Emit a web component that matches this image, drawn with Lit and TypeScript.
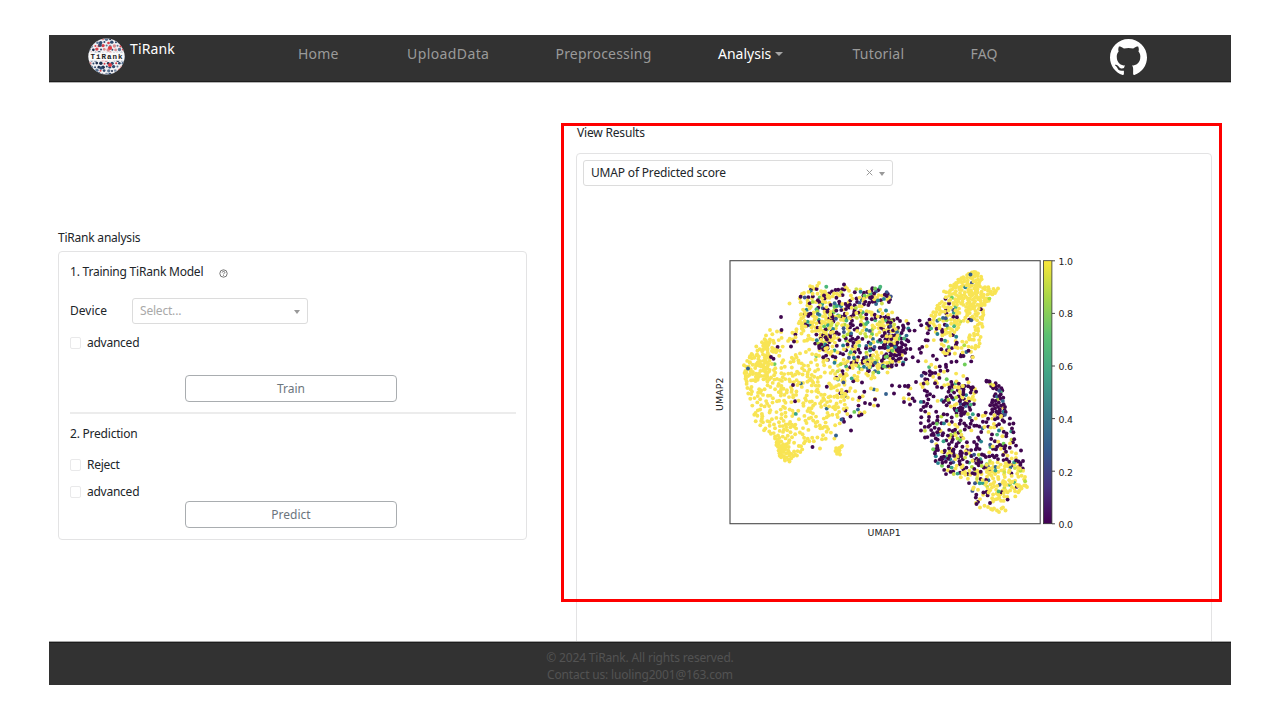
import { LitElement, html, svg, css } from "lit";
import { customElement } from "lit/decorators.js";

type Pt = [number, number];

const VIRIDIS = ["#440154", "#46327e", "#365c8d", "#3b7f8a", "#42a486", "#5cc072", "#a5d648", "#fbe63a"];
const YELLOW = "#f8e454";
const PURPLE = "#40074f";
const MID = ["#3b528b", "#31688e", "#26828e", "#35a386", "#4bb779", "#6ece58", "#b5de3b", "#cfe04a"];

function makeRandom(seed: number) {
  let s = seed;
  return () => {
    s = (s + 0x6d2b79f5) | 0;
    let t = Math.imul(s ^ (s >>> 15), 1 | s);
    t = (t + Math.imul(t ^ (t >>> 7), 61 | t)) ^ t;
    return ((t ^ (t >>> 14)) >>> 0) / 4294967296;
  };
}

function inside(x: number, y: number, poly: Pt[]) {
  let hit = false;
  for (let i = 0, j = poly.length - 1; i < poly.length; j = i++) {
    const [xi, yi] = poly[i];
    const [xj, yj] = poly[j];
    if (yi > y !== yj > y && x < ((xj - xi) * (y - yi)) / (yj - yi) + xi) hit = !hit;
  }
  return hit;
}

// Outline, number of cells, share of high scores, share of low scores.
// Outlines are in thirds of a plot unit, from the corner (725, 255).
type Cluster = [Pt[], number, number, number];

const CLUSTERS: Cluster[] = [
  [[[60, 320], [120, 262], [190, 300], [250, 280], [330, 330], [372, 365], [370, 430], [340, 520], [330, 555], [250, 562], [180, 600], [150, 560], [90, 500], [75, 440], [56, 390]], 375, 0.98, 0.008],
  [[[56, 330], [110, 250], [150, 255], [140, 350], [130, 380], [56, 380]], 66, 1, 0],
  [[[105, 265], [130, 225], [210, 225], [250, 260], [150, 290]], 16, 0.9, 0.05],
  [[[145, 530], [165, 550], [195, 592], [240, 580], [210, 608], [180, 618], [160, 600]], 42, 1, 0],
  [[[330, 572], [352, 575], [345, 600], [332, 598]], 7, 1, 0],
  [[[225, 100], [280, 88], [310, 95], [320, 180], [222, 180]], 62, 0.58, 0.2],
  [[[220, 170], [320, 170], [340, 240], [300, 290], [260, 260], [220, 210]], 92, 0.68, 0.17],
  [[[195, 195], [240, 200], [250, 260], [205, 265]], 12, 0.85, 0.1],
  [[[300, 110], [360, 90], [415, 105], [420, 190], [310, 190]], 75, 0.32, 0.43],
  [[[405, 110], [470, 92], [500, 120], [502, 140], [450, 150], [410, 150]], 46, 0.35, 0.33],
  [[[310, 180], [500, 160], [520, 230], [500, 330], [480, 360], [420, 350], [350, 330], [270, 310], [300, 200]], 285, 0.42, 0.37],
  [[[330, 330], [490, 300], [490, 360], [400, 380], [365, 440], [325, 390]], 60, 0.52, 0.2],
  [[[350, 410], [450, 400], [462, 450], [390, 490], [350, 500]], 22, 0.55, 0.35],
  [[[470, 180], [545, 195], [555, 230], [540, 330], [500, 340], [480, 250]], 78, 0.15, 0.7],
  [[[540, 195], [605, 190], [620, 250], [740, 290], [750, 320], [690, 350], [600, 340], [550, 300]], 46, 0.2, 0.68],
  [[[590, 350], [640, 340], [700, 350], [740, 380], [700, 400], [640, 400], [585, 400]], 36, 0.4, 0.38],
  [[[500, 385], [570, 385], [570, 445], [520, 430]], 9, 0.3, 0.65],
  [[[655, 110], [700, 67], [745, 48], [768, 60], [772, 90], [812, 102], [805, 122], [780, 150], [740, 165], [690, 140], [660, 130]], 138, 0.985, 0],
  [[[620, 160], [660, 130], [700, 150], [710, 200], [690, 235], [640, 240], [605, 220]], 85, 0.7, 0.15],
  [[[710, 150], [780, 160], [777, 210], [770, 262], [740, 315], [720, 260], [750, 220], [715, 200]], 56, 0.95, 0.03],
  [[[640, 230], [700, 240], [740, 300], [650, 300]], 22, 0.72, 0.2],
  [[[585, 430], [610, 420], [640, 480], [650, 540], [600, 548], [582, 500]], 32, 0.1, 0.8],
  [[[590, 400], [640, 430], [690, 380], [755, 400], [750, 450], [700, 470], [640, 440]], 72, 0.24, 0.56],
  [[[780, 375], [830, 390], [845, 480], [800, 500], [795, 450], [815, 410]], 54, 0.25, 0.6],
  [[[640, 470], [720, 460], [870, 490], [870, 560], [895, 625], [780, 620], [640, 610], [612, 570]], 185, 0.24, 0.62],
  [[[620, 580], [740, 590], [800, 640], [740, 660], [660, 660], [630, 620]], 80, 0.2, 0.52],
  [[[780, 620], [890, 620], [905, 690], [860, 737], [800, 740], [780, 690]], 112, 0.77, 0.12],
  [[[690, 655], [780, 650], [790, 720], [750, 750], [740, 700]], 30, 0.45, 0.38],
];

const YELLOW_DOTS: Pt[] = [
  [789.5, 303.5], [819, 283], [770, 330], [777, 331.5], [980, 507.5], [984.5, 505.8], [988, 507], [991, 509], [994, 508.5],
  [997, 510.5], [999, 512], [1001.5, 508.5], [1003, 507.5], [1005.5, 510.5], [992.5, 509.8], [976, 503], [973, 489], [1025, 477], [1025.5, 485.5],
  [838, 452], [840, 454.5], [835.5, 451], [820, 448.5], [842, 446], [871, 388.5], [877, 390],
  [996, 291], [998, 288.5], [995, 293], [974, 272], [978, 273.5], [789.5, 461.5], [785, 460.5], [1021, 487], [1027, 487], [1018, 486],
];
const PURPLE_DOTS: Pt[] = [
  [781, 317], [781.5, 330], [844, 284.5], [812.5, 447], [793, 385], [851, 430.5], [844, 421.8], [850.5, 416.5], [861.5, 414.5],
  [878, 405.5], [859.5, 397.5], [870, 404], [865, 403], [892, 385.5], [894, 393.5], [908, 386.8], [910, 404.5], [904, 402], [875, 399.5],
  [771, 357], [773.5, 358.8], [791, 346.5], [794, 341.5], [976.5, 504], [990, 503], [986.5, 380.8], [989.5, 381.5], [1023, 461], [1021, 450.5],
  [862, 382.5], [916, 382], [923.5, 407], [921, 430.5], [925, 437.5],
];
const BLUE_DOTS: Pt[] = [[970.5, 274.5], [748, 368.5], [836, 435.5], [841.5, 419.5], [886, 394]];

interface Dot { x: number; y: number; c: string; z: number }

function buildDots(): Dot[] {
  const rnd = makeRandom(77);
  const out: Dot[] = [];
  for (const [outline, count, high, low] of CLUSTERS) {
    const poly = outline.map(([x, y]): Pt => [725 + x / 3, 255 + y / 3]);
    const xs = poly.map((p) => p[0]);
    const ys = poly.map((p) => p[1]);
    const x0 = Math.min(...xs), x1 = Math.max(...xs), y0 = Math.min(...ys), y1 = Math.max(...ys);
    const local: Dot[] = [];
    for (let tries = 0; local.length < count && tries < 20000; tries++) {
      const x = x0 + rnd() * (x1 - x0);
      const y = y0 + rnd() * (y1 - y0);
      if (!inside(x, y, poly)) continue;
      if (local.some((d) => Math.hypot(d.x - x, d.y - y) < 2)) continue;
      const k = rnd();
      const m = MID[Math.floor(rnd() * MID.length)];
      local.push({ x, y, c: k < high ? YELLOW : k < high + low ? PURPLE : m, z: rnd() });
    }
    out.push(...local);
  }
  out.sort((a, b) => a.z - b.z);
  YELLOW_DOTS.forEach(([x, y]) => out.push({ x, y, c: YELLOW, z: 1 }));
  PURPLE_DOTS.forEach(([x, y]) => out.push({ x, y, c: PURPLE, z: 1 }));
  BLUE_DOTS.forEach(([x, y]) => out.push({ x, y, c: "#33608d", z: 1 }));
  return out;
}

@customElement("umap-plot")
export class UmapPlot extends LitElement {
  static styles = css`
    :host { display: block; }
    svg { display: block; }
    text { font-family: "DejaVu Sans", sans-serif; font-size: 9.4px; fill: #222; }
  `;
  private dots = buildDots();
  render() {
    const ticks = ["1.0", "0.8", "0.6", "0.4", "0.2", "0.0"];
    return html`<svg width="400" height="310" viewBox="700 240 400 310">
      <defs>
        <linearGradient id="bar" x1="0" y1="1" x2="0" y2="0">
          ${VIRIDIS.map((c, i) => svg`<stop offset=${i / 7} stop-color=${c}></stop>`)}
        </linearGradient>
      </defs>
      ${this.dots.map((d) => svg`<circle cx=${d.x.toFixed(1)} cy=${d.y.toFixed(1)} r="1.95" fill=${d.c}></circle>`)}
      <rect x="730" y="260.7" width="310.2" height="263" fill="none" stroke="#4a4a4a" stroke-width="1.1"></rect>
      <rect x="1043.5" y="260.7" width="8.4" height="263" fill="url(#bar)" stroke="#333" stroke-width="0.8"></rect>
      ${ticks.map((t, i) => svg`<line x1="1052" x2="1055" y1=${260.8 + i * 52.6} y2=${260.8 + i * 52.6} stroke="#333" stroke-width="0.9"></line>
        <text x="1058.5" y=${264.5 + i * 52.75} textLength="14.4">${t}</text>`)}
      <text x="867.6" y="536.3" textLength="33">UMAP1</text>
      <text transform="translate(723.4 411) rotate(-90)" textLength="33.5">UMAP2</text>
    </svg>`;
  }
}

@customElement("app-logo")
export class AppLogo extends LitElement {
  static styles = css`
    :host { display: block; }
    svg { display: block; }
    text { font-family: "Liberation Mono", monospace; font-weight: 700; font-size: 7.5px; fill: #222; }
  `;
  render() {
    const rnd = makeRandom(11);
    const colors = ["#2f4a70", "#2f4a70", "#5c7594", "#1f2f4d", "#d9414a", "#7d8fa8", "#d98a8e"];
    const dots: Pt[] = [];
    for (let r = 0; r < 11; r++)
      for (let c = 0; c < 11; c++)
        dots.push([c * 3.7 + (r % 2) * 1.8 + rnd() - 0.5, r * 3.5 + 1 + rnd() - 0.5]);
    return html`<svg width="37" height="37" viewBox="0 0 37 37">
      <defs><clipPath id="disc"><circle cx="18.5" cy="18.5" r="18"></circle></clipPath></defs>
      <g clip-path="url(#disc)">
        <rect width="37" height="37" fill="#f0f0f3"></rect>
        ${dots.map(([x, y], i) => svg`<circle cx=${x} cy=${y} r=${1 + (i % 3) * 0.35} fill=${colors[Math.floor(rnd() * colors.length)]}></circle>`)}
        <circle cx="22" cy="10" r="2.1" fill="#e23b43"></circle>
        <circle cx="22" cy="27" r="2" fill="#e23b43"></circle>
        <circle cx="12" cy="7" r="1.9" fill="#2f4a70"></circle>
        <circle cx="13" cy="30" r="1.8" fill="#2f4a70"></circle>
        <rect y="14.2" width="37" height="8.6" fill="#fafafa"></rect>
      </g>
      <text x="2.5" y="21" textLength="32">TiRank</text>
    </svg>`;
  }
}

@customElement("app-root")
export class AppRoot extends LitElement {
  static styles = css`
    :host {
      display: block;
      position: relative;
      box-sizing: border-box;
      width: 1280px;
      height: 720px;
      padding: 35px 49px;
      overflow: hidden;
      background: #fff;
      color: #212529;
      font-family: "Noto Sans", "Open Sans", sans-serif;
      font-size: 12px;
      line-height: 18px;
    }
    * { box-sizing: border-box; }
    .page { display: flex; flex-direction: column; height: 650px; }
    .nav {
      display: grid;
      grid-template-columns: 210px 109px 148.5px 162.5px 134.5px 118px 139.5px 1fr;
      height: 47px;
      padding-left: 39px;
      background: #323232;
      border-bottom: 1px solid #1d1d1d;
      box-shadow: 0 1px 0 #b5b5b5;
      color: #9a9a9a;
      font-size: 14px;
      line-height: 20px;
      white-space: nowrap;
      flex: none;
    }
    .brand { display: flex; gap: 5px; padding-top: 3px; color: #fff; }
    .brand-name { margin-top: 1px; letter-spacing: 0.12px; }
    .link { padding-top: 9px; letter-spacing: 0.2px; }
    .upload { letter-spacing: 0.4px; }
    .active { color: #fff; letter-spacing: 0; }
    .caret {
      display: inline-block;
      margin-left: 4px;
      vertical-align: 3px;
      border: 4px solid transparent;
      border-top-color: #a5a5a5;
      border-bottom: 0;
    }
    .github { padding-top: 4px; }
    .github svg { display: block; }
    .main { display: flex; height: 559px; padding: 0 19px 0 9px; justify-content: space-between; overflow: hidden; margin-top: 1px; flex: none; }
    .left { width: 469px; padding-top: 146px; }
    .right { width: 636px; padding-top: 41px; }
    .heading { height: 22px; white-space: nowrap; }
    .heading-right { height: 29px; }
    .right .heading { padding-left: 1px; }
    .card { border: 1px solid #e3e3e4; border-radius: 4px; }
    .form { height: 289px; padding: 11px 10px 0 11px; display: flex; flex-direction: column; }
    .title { display: flex; align-items: center; height: 18px; white-space: nowrap; }
    .help { margin: 3px 0 0 16px; }
    .row { display: flex; align-items: center; height: 26px; margin-top: 17px; }
    .row-label { width: 62px; }
    .select {
      display: flex;
      align-items: center;
      height: 26px;
      border: 1px solid #dcdcdc;
      border-radius: 3px;
      padding: 0 7px 1px 7px;
      white-space: nowrap;
    }
    .device { width: 176px; color: #a9a9a9; letter-spacing: -0.2px; }
    .arrow { margin: 2px 0 0 auto; border: 3.5px solid transparent; border-top: 4px solid #999; border-bottom: 0; }
    .clear { margin-left: auto; }
    .clear + .arrow { margin-left: 6px; }
    .check { display: flex; align-items: center; gap: 6px; height: 18px; letter-spacing: -0.25px; }
    .box { width: 11px; height: 12px; border: 1px solid #e9e9ea; border-radius: 2px; }
    .check-train { margin-top: 10px; }
    .check-reject { margin-top: 13px; }
    .check-pred { margin-top: 9px; }
    .btn {
      width: 212px;
      height: 27px;
      margin-left: 115px;
      border: 1px solid #a9adb0;
      border-radius: 4px;
      color: #6c757d;
      text-align: center;
      line-height: 25px;
      flex: none;
    }
    .btn-train { margin-top: 23px; }
    .rule { height: 2px; margin: 10px 0 11px; background: #ececec; flex: none; }
    .results { height: 520px; padding: 6px; }
    .result-select { width: 310px; }
    .plot { margin: 54px 0 0 117px; }
    .footer {
      height: 43px;
      background: #323232;
      border-top: 1px solid #1d1d1d;
      box-shadow: 0 -1px 0 #a5a5a5;
      color: #535353;
      padding-top: 5.5px;
      text-align: center;
      line-height: 17px;
      letter-spacing: -0.17px;
      flex: none;
    }
    .frame {
      position: absolute;
      left: 561px;
      top: 123px;
      width: 661px;
      height: 479px;
      border: 3px solid #fe0000;
    }
    .t-head { letter-spacing: -0.22px; }
    .t-value { letter-spacing: -0.18px; }
  `;
  render() {
    return html`
      <div class="page">
        <nav class="nav">
          <div class="brand"><app-logo></app-logo><span class="brand-name">TiRank</span></div>
          <span class="link">Home</span>
          <span class="link upload">UploadData</span>
          <span class="link">Preprocessing</span>
          <span class="link active">Analysis<i class="caret"></i></span>
          <span class="link">Tutorial</span>
          <span class="link">FAQ</span>
          <span class="github">
            <svg width="37" height="36" viewBox="0 0 16 15.6" preserveAspectRatio="none" fill="#fff"><path d="M8 0C3.58 0 0 3.58 0 8c0 3.54 2.29 6.53 5.47 7.59.4.07.55-.17.55-.38 0-.19-.01-.82-.01-1.49-2.01.37-2.53-.49-2.69-.94-.09-.23-.48-.94-.82-1.13-.28-.15-.68-.52-.01-.53.63-.01 1.08.58 1.23.82.72 1.21 1.87.87 2.33.66.07-.52.28-.87.51-1.07-1.78-.2-3.64-.89-3.64-3.95 0-.87.31-1.59.82-2.15-.08-.2-.36-1.02.08-2.12 0 0 .67-.21 2.2.82.64-.18 1.32-.27 2-.27s1.36.09 2 .27c1.53-1.04 2.2-.82 2.2-.82.44 1.1.16 1.92.08 2.12.51.56.82 1.27.82 2.15 0 3.07-1.87 3.75-3.65 3.95.29.25.54.73.54 1.48 0 1.07-.01 1.93-.01 2.2 0 .21.15.46.55.38A8.01 8.01 0 0 0 16 8c0-4.42-3.58-8-8-8z"></path></svg>
          </span>
        </nav>
        <main class="main">
          <section class="left">
            <div class="heading t-head">TiRank analysis</div>
            <div class="card form">
              <div class="title"><span class="t-head">1. Training TiRank Model</span>
                <svg class="help" width="9" height="9" viewBox="0 0 9 9" fill="none" stroke="#555" stroke-width="0.8">
                  <circle cx="4.5" cy="4.5" r="3.7"></circle>
                  <path d="M3.2 3.6c0-1.7 2.7-1.6 2.6 0-.1.8-1.3.8-1.3 1.8M4.5 6.1v.8"></path>
                </svg>
              </div>
              <div class="row"><span class="row-label">Device</span>
                <div class="select device">Select...<i class="arrow"></i></div>
              </div>
              <div class="check check-train"><i class="box"></i>advanced</div>
              <div class="btn btn-train">Train</div>
              <div class="rule"></div>
              <div class="title t-head">2. Prediction</div>
              <div class="check check-reject"><i class="box"></i>Reject</div>
              <div class="check check-pred"><i class="box"></i>advanced</div>
              <div class="btn">Predict</div>
            </div>
          </section>
          <section class="right">
            <div class="heading heading-right t-value">View Results</div>
            <div class="card results">
              <div class="select result-select"><span class="t-value">UMAP of Predicted score</span>
                <svg class="clear" width="7" height="7" viewBox="0 0 7 7" stroke="#999" stroke-width="1"><path d="M.7 .7 6.3 6.3M6.3 .7 .7 6.3"></path></svg>
                <i class="arrow"></i>
              </div>
              <umap-plot class="plot"></umap-plot>
            </div>
          </section>
        </main>
        <footer class="footer">
          <div>© 2024 TiRank. All rights reserved.</div>
          <div>Contact us: luoling2001@163.com</div>
        </footer>
      </div>
      <div class="frame"></div>
    `;
  }
}
